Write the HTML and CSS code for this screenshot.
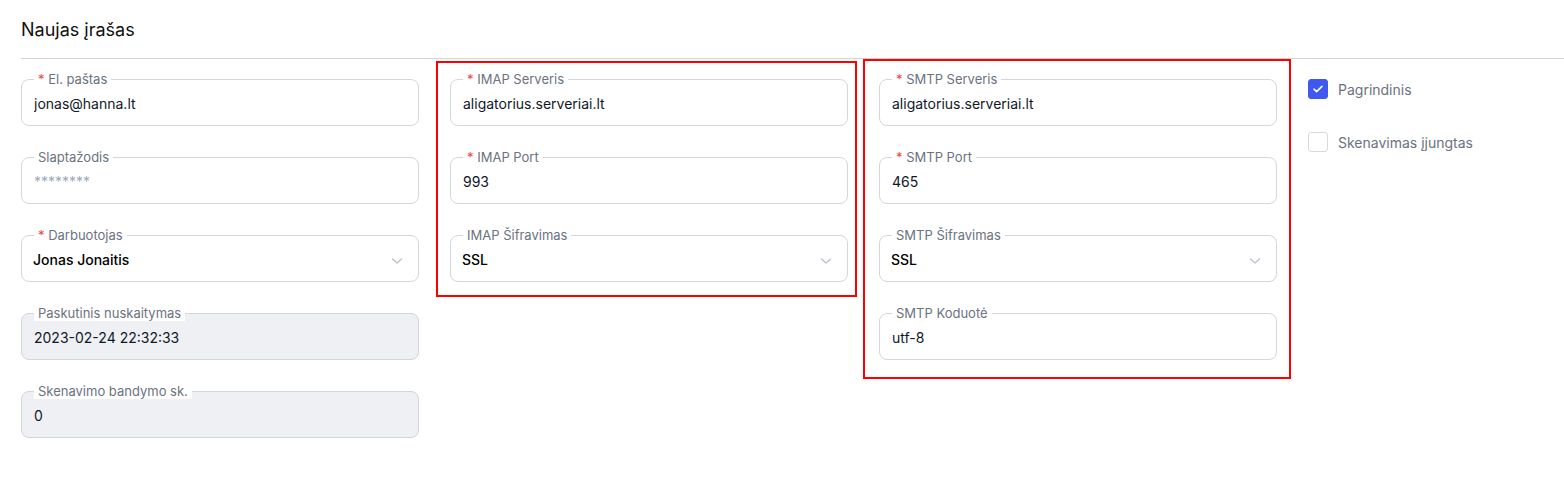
FILE: index.html
```html
<!DOCTYPE html>
<html lang="lt">
<head>
    <meta charset="UTF-8">
    <meta name="viewport" content="width=device-width, initial-scale=1.0">
    <title>Naujas įrašas</title>
    <link rel="stylesheet" href="styles.css">
</head>
<body>
    <div class="page-head">
        <h1>Naujas įrašas</h1>
    </div>

    <form class="form-grid">
        <div class="col">
            <fieldset class="field">
                <legend><span class="req">*</span> El. paštas</legend>
                <input type="text" value="jonas@hanna.lt">
            </fieldset>
            <fieldset class="field">
                <legend>Slaptažodis</legend>
                <input type="text" placeholder="********">
            </fieldset>
            <fieldset class="field">
                <legend><span class="req">*</span> Darbuotojas</legend>
                <div class="select">
                    <span class="select-value">Jonas Jonaitis</span>
                    <svg class="chevron" width="12" height="8" viewBox="0 0 12 8"><path d="M1.5 2 6 6 10.5 2" fill="none" stroke="#b8c1cf" stroke-width="1.3" stroke-linecap="round" stroke-linejoin="round"/></svg>
                </div>
            </fieldset>
            <fieldset class="field disabled">
                <legend>Paskutinis nuskaitymas</legend>
                <input type="text" value="2023-02-24 22:32:33" disabled>
            </fieldset>
            <fieldset class="field disabled">
                <legend>Skenavimo bandymo sk.</legend>
                <input type="text" value="0" disabled>
            </fieldset>
        </div>

        <div class="col marked marked-imap">
            <fieldset class="field">
                <legend><span class="req">*</span> IMAP Serveris</legend>
                <input type="text" value="aligatorius.serveriai.lt">
            </fieldset>
            <fieldset class="field">
                <legend><span class="req">*</span> IMAP Port</legend>
                <input type="text" value="993">
            </fieldset>
            <fieldset class="field">
                <legend>IMAP Šifravimas</legend>
                <div class="select">
                    <span class="select-value">SSL</span>
                    <svg class="chevron" width="12" height="8" viewBox="0 0 12 8"><path d="M1.5 2 6 6 10.5 2" fill="none" stroke="#b8c1cf" stroke-width="1.3" stroke-linecap="round" stroke-linejoin="round"/></svg>
                </div>
            </fieldset>
        </div>

        <div class="col marked marked-smtp">
            <fieldset class="field">
                <legend><span class="req">*</span> SMTP Serveris</legend>
                <input type="text" value="aligatorius.serveriai.lt">
            </fieldset>
            <fieldset class="field">
                <legend><span class="req">*</span> SMTP Port</legend>
                <input type="text" value="465">
            </fieldset>
            <fieldset class="field">
                <legend>SMTP Šifravimas</legend>
                <div class="select">
                    <span class="select-value">SSL</span>
                    <svg class="chevron" width="12" height="8" viewBox="0 0 12 8"><path d="M1.5 2 6 6 10.5 2" fill="none" stroke="#b8c1cf" stroke-width="1.3" stroke-linecap="round" stroke-linejoin="round"/></svg>
                </div>
            </fieldset>
            <fieldset class="field">
                <legend>SMTP Koduotė</legend>
                <input type="text" value="utf-8">
            </fieldset>
        </div>

        <div class="checks">
            <label class="check">
                <span class="box checked">
                    <svg width="12" height="10" viewBox="0 0 12 10"><path d="M2 5.2 4.6 7.6 10 2.4" fill="none" stroke="#fff" stroke-width="1.6" stroke-linecap="round" stroke-linejoin="round"/></svg>
                </span>
                Pagrindinis
            </label>
            <label class="check">
                <span class="box"></span>
                Skenavimas įjungtas
            </label>
        </div>
    </form>
</body>
</html>
```

FILE: styles.css
```css
* {
    box-sizing: border-box;
}
body {
    margin: 0;
    background: #fff;
    font-family: 'Inter', 'Noto Sans', sans-serif;
    color: #111827;
}
.page-head {
    margin-left: 21px;
    padding: 16px 0 14px;
    border-bottom: 1px solid #d4d4d4;
}
.page-head h1 {
    margin: 0;
    font-size: 18px;
    line-height: 28px;
    font-weight: 400;
    color: #111;
}
.form-grid {
    display: flex;
    align-items: flex-start;
    gap: 31px;
    padding: 12px 21px 0;
}
.col {
    width: 398px;
    flex: none;
    display: flex;
    flex-direction: column;
    gap: 23px;
}
.marked {
    position: relative;
}
.marked::after {
    content: "";
    position: absolute;
    border: 2px solid #ff0000;
    pointer-events: none;
}
.marked-imap::after {
    top: -10px;
    left: -14px;
    right: -9px;
    bottom: -15px;
}
.marked-smtp::after {
    top: -12px;
    left: -16px;
    right: -14px;
    bottom: -19px;
}
.field {
    margin: 0;
    min-width: 0;
    padding: 7px 12px 11px;
    border: 1px solid #d3d6dc;
    border-radius: 8px;
    background: #fff;
}
.field legend {
    padding: 0 4px;
    font-size: 13px;
    line-height: 16px;
    color: #6b7280;
    background: #fff;
}
.req {
    color: #ef4444;
}
.field input {
    display: block;
    width: 100%;
    height: 20px;
    padding: 0;
    border: none;
    outline: none;
    background: transparent;
    font-family: inherit;
    font-size: 14px;
    line-height: 20px;
    color: #111827;
}
.field input::placeholder {
    color: #9fa9bb;
}
.field.disabled {
    background: #eef0f4;
}
.field.disabled input {
    color: #111827;
    -webkit-text-fill-color: #111827;
}
.select {
    display: flex;
    align-items: center;
    justify-content: space-between;
    height: 20px;
    margin-left: -1px;
}
.select-value {
    font-size: 14px;
    line-height: 20px;
    font-weight: 500;
    color: #000;
}
.chevron {
    margin-right: 3px;
    margin-top: 2px;
}
.checks {
    flex: 1;
    display: flex;
    flex-direction: column;
    padding-top: 8px;
    gap: 33px;
}
.check {
    display: flex;
    align-items: center;
    gap: 10px;
    height: 20px;
    font-size: 14px;
    color: #6b7280;
}
.box {
    width: 20px;
    height: 20px;
    border: 1px solid #d6d9de;
    border-radius: 3px;
    background: #fff;
    display: flex;
    align-items: center;
    justify-content: center;
}
.box.checked {
    background: #3f58f0;
    border-color: #3f58f0;
}
```
